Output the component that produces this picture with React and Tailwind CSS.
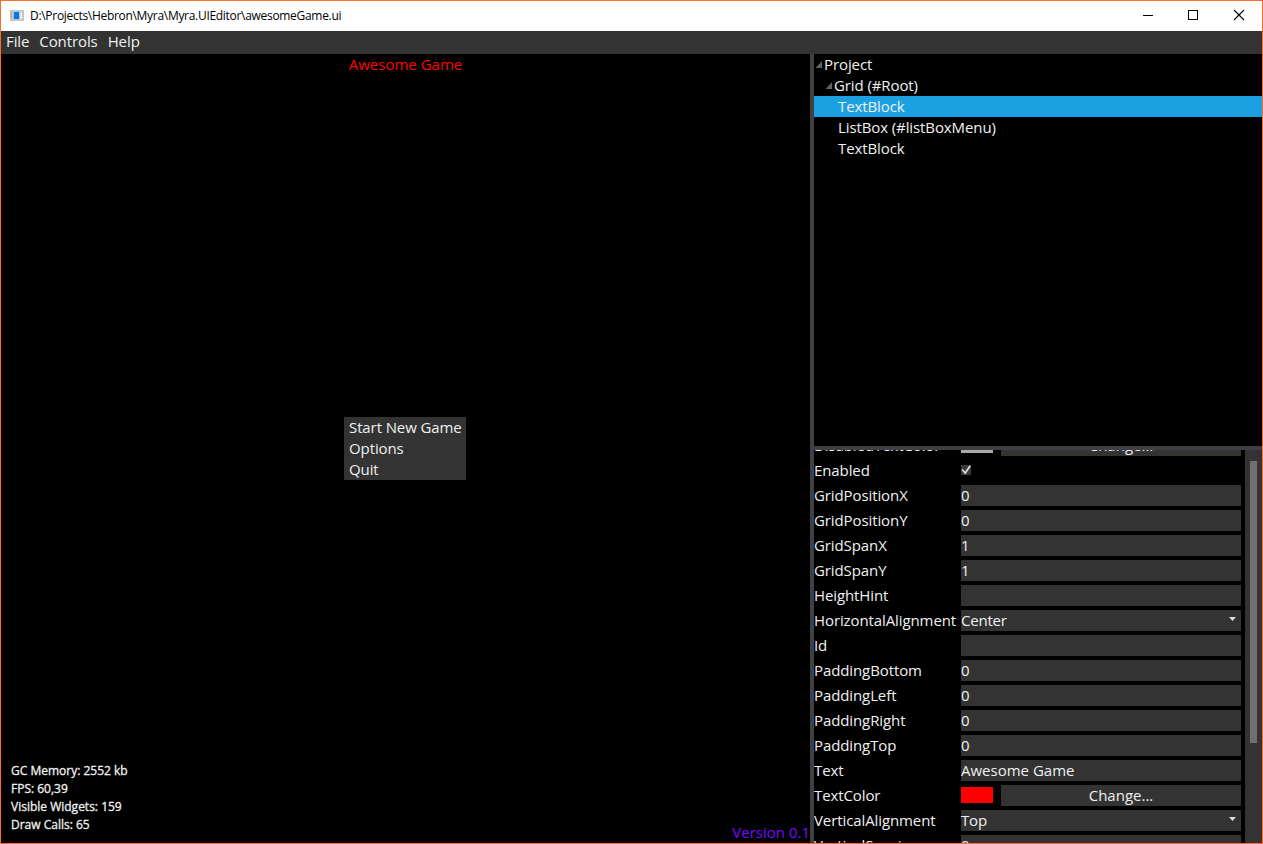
const TREE = [
  { text: 'Project', pad: 'pl-[10px]', arrow: 'left-[2px]' },
  { text: 'Grid (#Root)', pad: 'pl-[20px]', arrow: 'left-[12px]' },
  { text: 'TextBlock', pad: 'pl-[24px]', selected: true },
  { text: 'ListBox (#listBoxMenu)', pad: 'pl-[24px]' },
  { text: 'TextBlock', pad: 'pl-[24px]' },
];

const PROPS = [
  { name: 'DisabledTextColor', kind: 'color', swatch: 'bg-[#aaaaaa]' },
  { name: 'Enabled', kind: 'check' },
  { name: 'GridPositionX', value: '0' },
  { name: 'GridPositionY', value: '0' },
  { name: 'GridSpanX', value: '1' },
  { name: 'GridSpanY', value: '1' },
  { name: 'HeightHint', value: '' },
  { name: 'HorizontalAlignment', value: 'Center', kind: 'combo' },
  { name: 'Id', value: '' },
  { name: 'PaddingBottom', value: '0' },
  { name: 'PaddingLeft', value: '0' },
  { name: 'PaddingRight', value: '0' },
  { name: 'PaddingTop', value: '0' },
  { name: 'Text', value: 'Awesome Game' },
  { name: 'TextColor', kind: 'color', swatch: 'bg-[#ff0000]' },
  { name: 'VerticalAlignment', value: 'Top', kind: 'combo' },
  { name: 'VerticalSpacing', value: '0' },
];

function TitleBar() {
  return (
    <div className="flex h-[30px] shrink-0 items-center bg-white text-black">
      <svg className="-mt-px ml-[9px] shrink-0" width="14" height="11" viewBox="0 0 14 11" shapeRendering="crispEdges">
        <rect width="14" height="11" fill="#c4c6c8" />
        <rect x="1" y="2" width="1" height="1" fill="#8f9499" />
        <rect x="1" y="4" width="1" height="1" fill="#8f9499" />
        <rect x="1" y="6" width="1" height="1" fill="#8f9499" />
        <rect x="3" y="2" width="7" height="7" fill="#9cc9f0" />
        <rect x="4" y="2" width="5" height="7" fill="#0a78d7" />
        <rect x="10" y="2" width="2" height="7" fill="#e9eef2" />
      </svg>
      <span className="ml-[6px] grow text-[12px] leading-[18px] tracking-[-0.3px]">D:\Projects\Hebron\Myra\Myra.UIEditor\awesomeGame.ui</span>
      <svg width="120" height="30" viewBox="0 0 120 30" fill="none" stroke="#000">
        <path d="M1 14.5H11M46.5 9.5H55.5V18.5H46.5Z" shapeRendering="crispEdges" />
        <path d="M92 9L102 19M102 9L92 19" strokeWidth="1.1" />
      </svg>
    </div>
  );
}

function Tree() {
  return (
    <div className="h-[392px] shrink-0 tracking-[-0.1px]">
      {TREE.map((n, i) => (
        <div key={i} className={'relative h-[21px] ' + n.pad + (n.selected ? ' bg-[#1ba1e2]' : '')}>
          {n.arrow && (
            <svg className={'absolute top-[7px] ' + n.arrow} width="7" height="7" viewBox="0 0 7 7">
              <path d="M6 0V7H0V6.4Z" fill="#626262" />
            </svg>
          )}
          {n.text}
        </div>
      ))}
    </div>
  );
}

function Editor({ item }) {
  if (item.kind === 'color') {
    return (
      <div className="flex w-[280px] gap-2">
        <div className={'mt-[2px] h-4 w-8 ' + item.swatch} />
        <div className="grow bg-[#333333] text-center">Change...</div>
      </div>
    );
  }
  if (item.kind === 'check') {
    return (
      <svg className="mt-[5px]" width="10" height="10" viewBox="0 0 10 10">
        <rect width="10" height="10" fill="#3a3a3a" />
        <path d="M1.2 4.5L4.2 8L9.2 0.8" fill="none" stroke="#dedede" strokeWidth="1.7" />
      </svg>
    );
  }
  return (
    <div className="flex w-[280px] justify-between bg-[#333333]">
      <span className={item.kind === 'combo' ? 'tracking-[-0.2px]' : ''}>{item.value}</span>
      {item.kind === 'combo' && (
        <svg className="mt-[7px] mr-[5px]" width="7" height="4" viewBox="0 0 7 4">
          <path d="M0 0H7L3.5 4Z" fill="#ddd" />
        </svg>
      )}
    </div>
  );
}

function Properties() {
  return (
    <div className="flex min-h-0 grow overflow-hidden">
      <div className="-mt-[15px] flex w-[431px] shrink-0 flex-col gap-1">
        {PROPS.map((p) => (
          <div key={p.name} className="flex h-[21px] shrink-0">
            <div className="w-[147px] shrink-0 tracking-[-0.1px]">{p.name}</div>
            <Editor item={p} />
          </div>
        ))}
      </div>
      <div className="grow bg-[#333333] pt-[11px] pl-[5px]">
        <div className="h-[282px] w-[7px] bg-[#707070]" />
      </div>
    </div>
  );
}

export default function App() {
  return (
    <div className="flex h-[844px] w-[1263px] flex-col overflow-hidden border border-[#ff6a30] bg-black font-['Open_Sans','Noto_Sans',sans-serif] text-[15px] leading-[21px] whitespace-pre text-[#f0f0f0]">
      <TitleBar />
      <div className="flex h-[23px] shrink-0 gap-[10px] bg-[#333333] pl-[5px] tracking-[-0.1px]">
        <span>File</span>
        <span>Controls</span>
        <span>Help</span>
      </div>
      <div className="flex min-h-0 grow">
        <div className="flex w-[809px] shrink-0 flex-col">
          <div className="flex h-[363px] justify-center text-[#ff0000]">Awesome Game</div>
          <div className="ml-[343px] flex h-[63px] w-[122px] flex-col bg-[#333333] pl-[5px] tracking-[-0.1px]">
            <span>Start New Game</span>
            <span>Options</span>
            <span>Quit</span>
          </div>
          <div className="mt-auto flex items-end justify-between">
            <div className="mb-[9px] flex flex-col pl-[10px] text-[12px] leading-[18px] [-webkit-text-stroke:0.3px_#f0f0f0]">
              <span>GC Memory: 2552 kb</span>
              <span>FPS: 60,39</span>
              <span>Visible Widgets: 159</span>
              <span>Draw Calls: 65</span>
            </div>
            <span className="text-[#7a08ff]">Version 0.1</span>
          </div>
        </div>
        <div className="w-1 shrink-0 bg-[#3f3f46]" />
        <div className="flex min-w-0 grow flex-col">
          <Tree />
          <div className="h-1 shrink-0 bg-[#3f3f46]" />
          <Properties />
        </div>
      </div>
    </div>
  );
}
